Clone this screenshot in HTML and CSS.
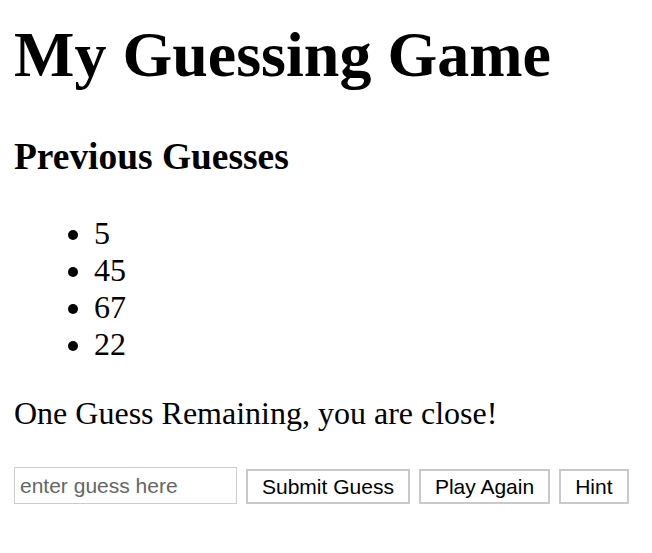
FILE: index.html
```html
<!DOCTYPE html>
<html lang="en">
<head>
<meta charset="utf-8">
<title>My Guessing Game</title>
<link rel="stylesheet" href="styles.css">
</head>
<body>
  <h1 class="title">My Guessing Game</h1>
  <h3 class="subtitle">Previous Guesses</h3>
  <ul class="guesses">
    <li>5</li>
    <li>45</li>
    <li>67</li>
    <li>22</li>
  </ul>
  <p class="status">One Guess Remaining, you are close!</p>
  <div class="controls">
    <input class="guess-input" type="text" placeholder="enter guess here">
    <button class="btn">Submit Guess</button>
    <button class="btn">Play Again</button>
    <button class="btn">Hint</button>
  </div>
</body>
</html>
```
FILE: styles.css
```css
html, body {
  background: #ffffff;
}
body {
  margin: 0 14px;
  font-family: "Liberation Serif", "Times New Roman", serif;
  font-size: 32px;
  color: #000;
}
.title {
  font-size: 64px;
  font-weight: bold;
  margin: 18px 0 43px;
}
.subtitle {
  font-size: 37.44px;
  font-weight: bold;
  margin: 43px 0 37.44px;
}
.guesses {
  margin: 37.44px 0 32px;
  padding-left: 80px;
}
.status {
  margin: 32px 0;
}
.controls {
  display: flex;
  align-items: flex-start;
  gap: 9px;
  margin-top: 35px;
}
.guess-input {
  box-sizing: border-box;
  width: 223px;
  height: 37px;
  margin: 0;
  padding: 1px 5px;
  border: 1px solid #cccccc;
  font-family: "Liberation Sans", Arial, sans-serif;
  font-size: 21px;
  color: #000;
  outline: none;
}
.guess-input::placeholder {
  color: #666666;
}
.btn {
  box-sizing: border-box;
  height: 35px;
  margin: 2px 0 0;
  padding: 0 14px;
  border: 2px solid #c9c9c9;
  background: #ffffff;
  font-family: "Liberation Sans", Arial, sans-serif;
  font-size: 21px;
  color: #000;
}
```
